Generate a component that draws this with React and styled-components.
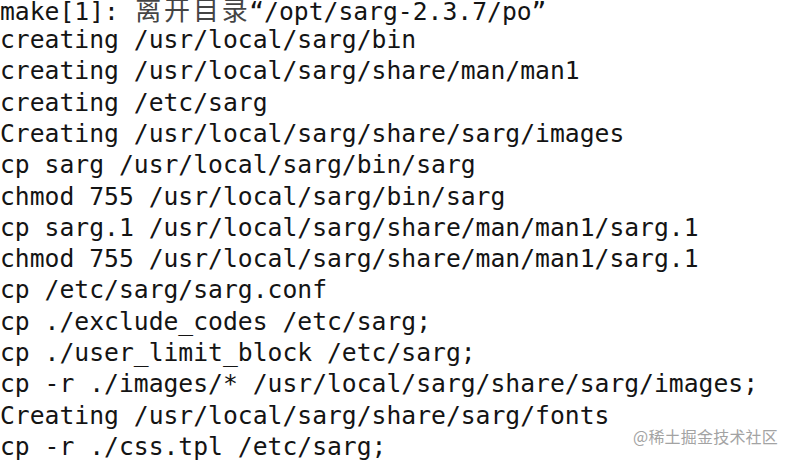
import React from "react";
import styled, { createGlobalStyle } from "styled-components";

const Global = createGlobalStyle`
  html, body { margin: 0; padding: 0; background: #ffffff; }
  body { width: 794px; height: 462px; overflow: hidden; }
`;

const Screen = styled.div`
  position: relative;
  width: 794px;
  height: 462px;
  background: #ffffff;
  overflow: hidden;
`;

const Terminal = styled.pre`
  margin: -7.2px 0 0 0;
  padding: 0;
  font-family: "DejaVu Sans Mono", "Liberation Mono", monospace;
  font-size: 24.7px;
  line-height: 31.3px;
  color: #141414;
  white-space: pre;
`;

const Line = styled.div`
  height: 31.3px;
`;

const Wide = styled.span`
  display: inline-block;
  width: 2ch;
  text-align: center;
  font-family: "Noto Sans CJK SC", sans-serif;
  font-size: 26px;
  font-weight: 400;
  color: #444444;
`;

const Watermark = styled.div`
  position: absolute;
  right: 16px;
  bottom: 17px;
  font-family: "Noto Sans CJK SC", "Noto Sans", sans-serif;
  font-size: 16px;
  line-height: 18px;
  color: #a3a3a3;
  letter-spacing: 0.2px;
`;

const lines = [
  "creating /usr/local/sarg/bin",
  "creating /usr/local/sarg/share/man/man1",
  "creating /etc/sarg",
  "Creating /usr/local/sarg/share/sarg/images",
  "cp sarg /usr/local/sarg/bin/sarg",
  "chmod 755 /usr/local/sarg/bin/sarg",
  "cp sarg.1 /usr/local/sarg/share/man/man1/sarg.1",
  "chmod 755 /usr/local/sarg/share/man/man1/sarg.1",
  "cp /etc/sarg/sarg.conf",
  "cp ./exclude_codes /etc/sarg;",
  "cp ./user_limit_block /etc/sarg;",
  "cp -r ./images/* /usr/local/sarg/share/sarg/images;",
  "Creating /usr/local/sarg/share/sarg/fonts",
  "cp -r ./css.tpl /etc/sarg;",
];

export default function App() {
  return (
    <Screen>
      <Global />
      <Terminal>
        <Line>
          {"make[1]: "}
          {"离开目录".split("").map((c, i) => (
            <Wide key={i}>{c}</Wide>
          ))}
          {"“/opt/sarg-2.3.7/po”"}
        </Line>
        {lines.map((l, i) => (
          <Line key={i}>{l}</Line>
        ))}
      </Terminal>
      <Watermark>@稀土掘金技术社区</Watermark>
    </Screen>
  );
}
